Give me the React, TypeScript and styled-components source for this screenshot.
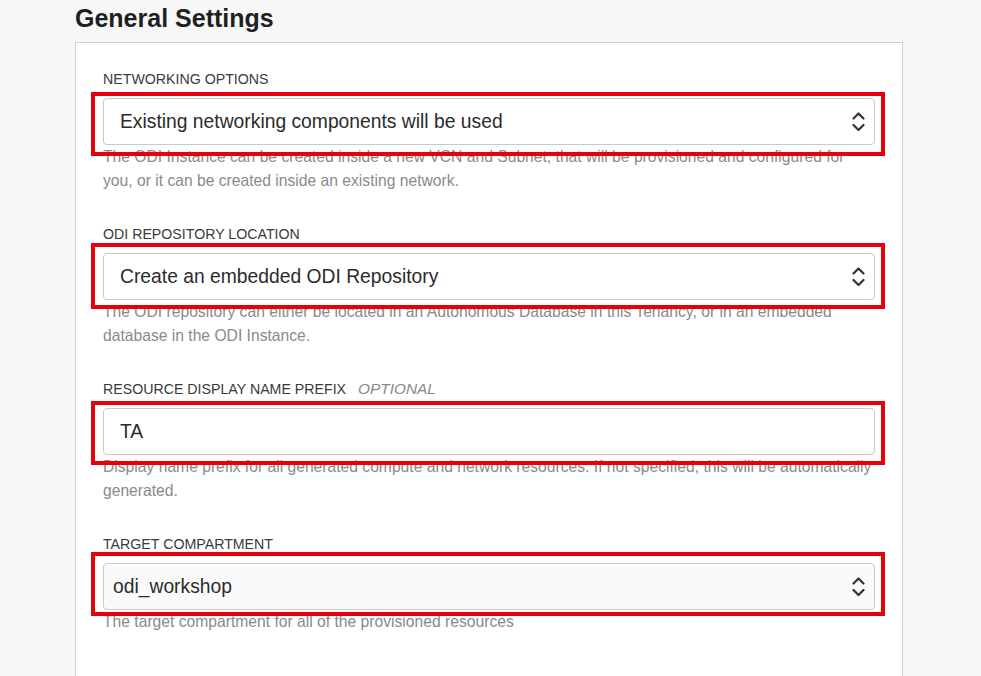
import styled, { createGlobalStyle } from "styled-components";

const GlobalStyle = createGlobalStyle`
  html, body {
    margin: 0;
    padding: 0;
    background: #f7f7f7;
    font-family: "Liberation Sans", Arial, sans-serif;
  }
`;

const Page = styled.div`
  padding: 3px 0 0 75px;
  width: 828px;
`;

const Title = styled.h2`
  margin: 0 0 9px;
  font-size: 25px;
  line-height: 30px;
  font-weight: 700;
  color: #1f1f1f;
`;

const Card = styled.div`
  box-sizing: border-box;
  width: 828px;
  background: #fff;
  border: 1px solid #cfcfcf;
  padding: 27px 27px 60px;
  display: flex;
  flex-direction: column;
  gap: 32px;
`;

const Section = styled.div`
  display: flex;
  flex-direction: column;
`;

const Label = styled.div`
  font-size: 14.2px;
  line-height: 18px;
  color: #3a3a3a;
  margin-bottom: 10px;
  text-transform: uppercase;
`;

const Optional = styled.span`
  font-style: italic;
  font-size: 15.4px;
  color: #8a8a8a;
  margin-left: 12px;
`;

const BoxWrap = styled.div`
  position: relative;
`;

const Box = styled.div<{ $pad: number; $bg?: string }>`
  box-sizing: border-box;
  height: 47px;
  border: 1px solid #c9c9c9;
  border-radius: 4px;
  background: ${(p) => p.$bg || "#fff"};
  display: flex;
  align-items: center;
  justify-content: space-between;
  padding: 0 9px 0 ${(p) => p.$pad}px;
  font-size: 19.3px;
  color: #2b2b2b;
`;

const Highlight = styled.div<{ $top: number; $bottom: number }>`
  position: absolute;
  left: -12px;
  right: -10px;
  top: ${(p) => -p.$top}px;
  bottom: ${(p) => -p.$bottom}px;
  border: 4px solid #e5000a;
  pointer-events: none;
`;

const Help = styled.div`
  font-size: 15.66px;
  line-height: 24px;
  color: #8a8a8a;
`;

const Chevrons = () => (
  <svg width="13" height="22" viewBox="0 0 13 22" fill="none">
    <polyline points="1.5,7.5 6.5,2.5 11.5,7.5" stroke="#333" strokeWidth="2.2" strokeLinecap="round" strokeLinejoin="round" />
    <polyline points="1.5,14 6.5,19 11.5,14" stroke="#333" strokeWidth="2.2" strokeLinecap="round" strokeLinejoin="round" />
  </svg>
);

type FieldProps = {
  label: string;
  optional?: boolean;
  value: string;
  select?: boolean;
  pad?: number;
  bg?: string;
  mark: [number, number];
  help: string;
};

const Field = ({ label, optional, value, select, pad = 16, bg, mark, help }: FieldProps) => (
  <Section>
    <Label>
      {label}
      {optional ? <Optional>OPTIONAL</Optional> : null}
    </Label>
    <BoxWrap>
      <Box $pad={pad} $bg={bg}>
        <span>{value}</span>
        {select ? <Chevrons /> : null}
      </Box>
      <Highlight $top={mark[0]} $bottom={mark[1]} />
    </BoxWrap>
    <Help>{help}</Help>
  </Section>
);

export default function App() {
  return (
    <Page>
      <GlobalStyle />
      <Title>General Settings</Title>
      <Card>
        <Field
          label="Networking Options"
          value="Existing networking components will be used"
          select
          mark={[6, 11]}
          help="The ODI Instance can be created inside a new VCN and Subnet, that will be provisioned and configured for you, or it can be created inside an existing network."
        />
        <Field
          label="ODI Repository Location"
          value="Create an embedded ODI Repository"
          select
          mark={[10, 9]}
          help="The ODI repository can either be located in an Autonomous Database in this Tenancy, or in an embedded database in the ODI Instance."
        />
        <Field
          label="Resource Display Name Prefix"
          optional
          value="TA"
          mark={[7, 10]}
          help="Display name prefix for all generated compute and network resources. If not specified, this will be automatically generated."
        />
        <Field
          label="Target Compartment"
          value="odi_workshop"
          select
          pad={9}
          bg="#fafafa"
          mark={[11, 6]}
          help="The target compartment for all of the provisioned resources"
        />
      </Card>
    </Page>
  );
}
